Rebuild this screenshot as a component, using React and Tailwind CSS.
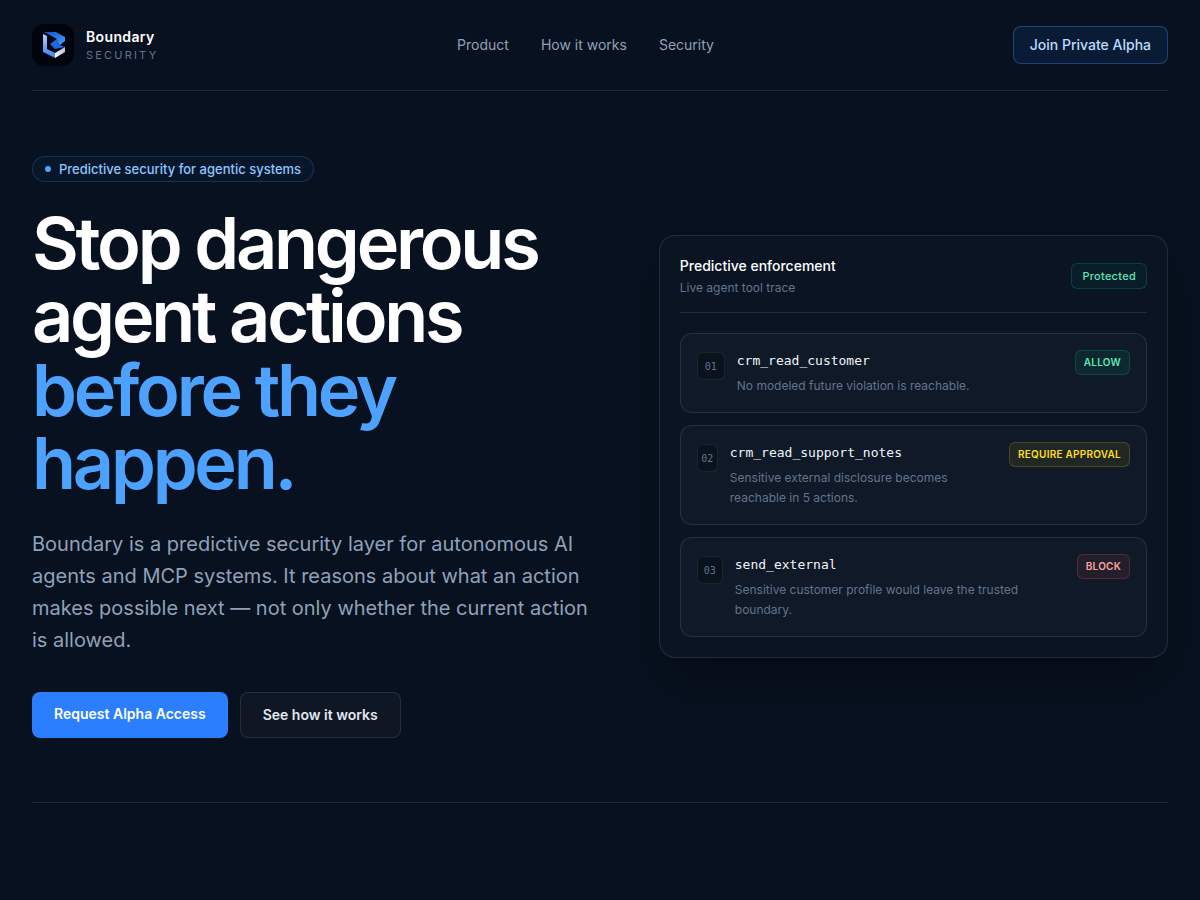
import React from 'react';

const navLinks = [
  { label: 'Product', href: '#product' },
  { label: 'How it works', href: '#how-it-works' },
  { label: 'Security', href: '#security' },
];

const traceSteps = [
  {
    id: '01',
    tool: 'crm_read_customer',
    detail: 'No modeled future violation is reachable.',
    verdict: 'ALLOW',
    indexWidth: 'w-7',
    verdictStyle: 'border-emerald-400/20 bg-emerald-400/8 text-emerald-300',
  },
  {
    id: '02',
    tool: 'crm_read_support_notes',
    detail: 'Sensitive external disclosure becomes reachable in 5 actions.',
    verdict: 'REQUIRE APPROVAL',
    indexWidth: 'w-[21px]',
    verdictStyle: 'border-yellow-400/20 bg-yellow-400/8 text-yellow-300',
  },
  {
    id: '03',
    tool: 'send_external',
    detail: 'Sensitive customer profile would leave the trusted boundary.',
    verdict: 'BLOCK',
    indexWidth: 'w-[26px]',
    verdictStyle: 'border-red-400/20 bg-red-400/8 text-red-300',
  },
];

function Logo() {
  return (
    <svg viewBox="0 0 42 42" className="h-[42px] w-[42px] rounded-xl bg-[#02040d]" aria-hidden="true">
      <defs>
        <linearGradient id="logoTop" x1="0" y1="0" x2="1" y2="1">
          <stop offset="0" stopColor="#1450c4" />
          <stop offset="1" stopColor="#45a0ff" />
        </linearGradient>
        <linearGradient id="logoSide" x1="0" y1="0" x2="0" y2="1">
          <stop offset="0" stopColor="#b4d2ff" />
          <stop offset="0.5" stopColor="#6ea6f8" />
          <stop offset="1" stopColor="#3f82ee" />
        </linearGradient>
        <linearGradient id="logoBase" x1="1" y1="0" x2="0" y2="1">
          <stop offset="0" stopColor="#a9b6d3" />
          <stop offset="1" stopColor="#ffffff" />
        </linearGradient>
      </defs>
      <path d="M11 10 L15 12 V25 L23 29 V34 L11 28 Z" fill="url(#logoSide)" />
      <path d="M12 8 H24 L33 13 V17 L28 21 L20 19 L25 15 Z" fill="url(#logoTop)" />
      <path d="M18 20 L25 15 L28 21 L33 23 L23 25 Z" fill="#1c68e3" />
      <path d="M33 23 V28 L23 34 V29 Z" fill="url(#logoBase)" />
    </svg>
  );
}

function Header() {
  return (
    <header className="flex items-center justify-between border-b border-white/10 py-6">
      <a href="#top" className="flex items-center gap-3">
        <Logo />
        <span className="flex flex-col">
          <span className="text-sm leading-5 font-semibold tracking-wide text-white">Boundary</span>
          <span className="text-[11px] leading-4 tracking-[0.2em] text-slate-500">SECURITY</span>
        </span>
      </a>
      <nav className="flex gap-8 text-sm text-slate-400">
        {navLinks.map((link) => (
          <a key={link.href} href={link.href}>{link.label}</a>
        ))}
      </nav>
      <a href="#alpha" className="rounded-lg border border-blue-400/30 bg-blue-500/10 px-4 py-2 text-sm font-medium text-blue-200">
        Join Private Alpha
      </a>
    </header>
  );
}

function TraceStep({ step }) {
  return (
    <li className="flex items-start justify-between gap-4 rounded-xl border border-white/10 bg-[#0f1927] p-4">
      <div className="flex gap-3">
        <span className={`mt-[2px] flex h-7 shrink-0 items-center justify-center rounded-md border border-white/8 bg-[#09121d] font-['DejaVu_Sans_Mono',monospace] text-[10px] text-slate-500 ${step.indexWidth}`}>
          {step.id}
        </span>
        <div>
          <p className="font-['DejaVu_Sans_Mono',monospace] text-[13px] leading-[22px] text-slate-100">{step.tool}</p>
          <p className="mt-1 text-xs leading-5 text-slate-500">{step.detail}</p>
        </div>
      </div>
      <span className={`shrink-0 rounded-md border px-2 py-1 text-[10px] leading-[15px] font-semibold tracking-wide ${step.verdictStyle}`}>
        {step.verdict}
      </span>
    </li>
  );
}

function EnforcementCard() {
  return (
    <div className="rounded-2xl border border-white/10 bg-[#0a1423] p-5 shadow-2xl shadow-black/40">
      <div className="flex items-center justify-between border-b border-white/10 pb-4">
        <div>
          <h2 className="text-sm font-medium text-white">Predictive enforcement</h2>
          <p className="mt-1 text-xs text-slate-500">Live agent tool trace</p>
        </div>
        <span className="rounded-md border border-emerald-400/20 bg-emerald-400/5 px-2.5 py-1 text-[11px] leading-4 font-medium tracking-wide text-emerald-300">
          Protected
        </span>
      </div>
      <ul className="mt-5 space-y-3">
        {traceSteps.map((step) => (
          <TraceStep key={step.id} step={step} />
        ))}
      </ul>
    </div>
  );
}

function Hero() {
  return (
    <section className="grid grid-cols-[1.05fr_0.95fr] items-center gap-16 border-b border-white/10 pt-[65px] pb-16">
      <div>
        <div className="flex w-fit items-center gap-2 rounded-full border border-blue-400/20 bg-blue-500/5 px-3 py-1 text-[13px] leading-4 font-medium text-blue-300">
          <span className="h-1.5 w-1.5 rounded-full bg-blue-400"></span>
          Predictive security for agentic systems
        </div>
        <h1 className="mt-6 text-7xl leading-[1.02] font-semibold tracking-[-0.045em] text-white">
          Stop dangerous agent actions
          <span className="block text-[#4da2ff]">before they happen.</span>
        </h1>
        <p className="mt-7 text-xl leading-8 text-slate-400">
          Boundary is a predictive security layer for autonomous AI agents and MCP systems. It reasons about what an action makes possible next — not only whether the current action is allowed.
        </p>
        <div className="mt-9 flex gap-3 text-sm font-semibold">
          <a href="#alpha" className="rounded-lg bg-[#2b7fff] px-[22px] py-3 text-white">Request Alpha Access</a>
          <a href="#how-it-works" className="rounded-lg border border-white/10 bg-[#0f1725] px-[22px] py-3 text-slate-200">See how it works</a>
        </div>
      </div>
      <EnforcementCard />
    </section>
  );
}

function App() {
  return (
    <div id="top" className="min-h-screen bg-[#07111f] font-['Inter',sans-serif] text-white">
      <main className="mx-auto max-w-7xl px-8">
        <Header />
        <Hero />
      </main>
    </div>
  );
}

export default App;
